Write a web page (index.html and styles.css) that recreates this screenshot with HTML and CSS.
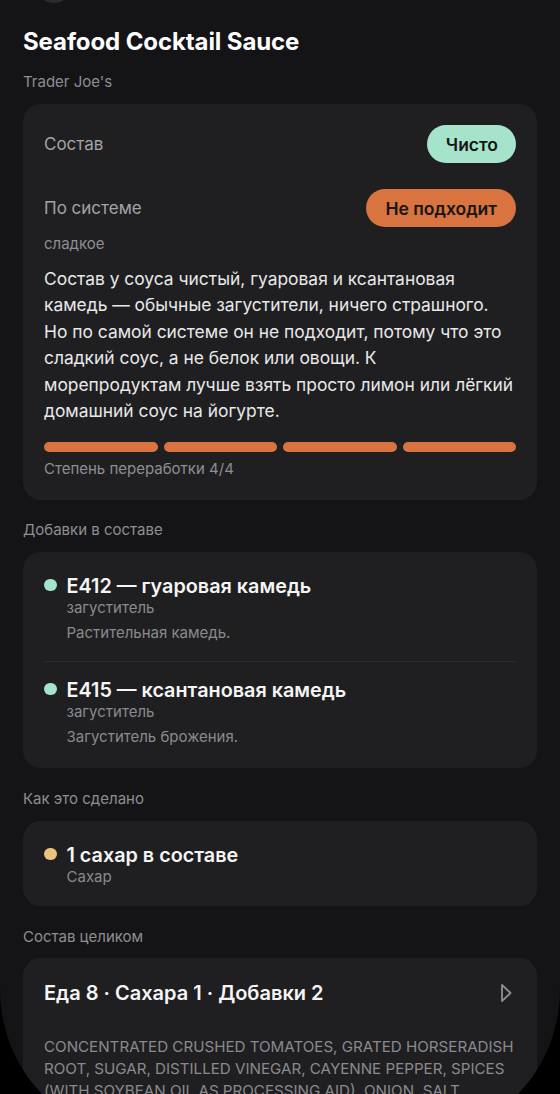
FILE: index.html
```html
<!DOCTYPE html>
<html lang="ru">
<head>
<meta charset="utf-8">
<title>Seafood Cocktail Sauce</title>
<link rel="stylesheet" href="styles.css">
</head>
<body>
<div class="screen">
  <div class="topbar"><span class="back"></span></div>
  <h1 class="title">Seafood Cocktail Sauce</h1>
  <div class="brand">Trader Joe's</div>

  <section class="card verdict">
    <div class="row">
      <span class="row-label">Состав</span>
      <span class="pill pill-clean">Чисто</span>
    </div>
    <div class="row row-system">
      <span class="row-label">По системе</span>
      <span class="pill pill-bad">Не подходит</span>
    </div>
    <div class="tag">сладкое</div>
    <p class="summary">Состав у соуса чистый, гуаровая и ксантановая камедь&nbsp;— обычные загустители, ничего страшного. Но по самой системе он не подходит, потому что это сладкий соус, а не белок или овощи. К морепродуктам лучше взять просто лимон или лёгкий домашний соус на йогурте.</p>
    <div class="bars">
      <span class="bar"></span><span class="bar"></span><span class="bar"></span><span class="bar"></span>
    </div>
    <div class="bars-caption">Степень переработки 4/4</div>
  </section>

  <div class="section-label">Добавки в составе</div>
  <section class="card list">
    <div class="item">
      <span class="dot dot-mint"></span>
      <div class="item-body">
        <div class="item-title">E412 — гуаровая камедь</div>
        <div class="item-sub">загуститель</div>
        <div class="item-desc">Растительная камедь.</div>
      </div>
    </div>
    <div class="divider"></div>
    <div class="item">
      <span class="dot dot-mint"></span>
      <div class="item-body">
        <div class="item-title">E415 — ксантановая камедь</div>
        <div class="item-sub">загуститель</div>
        <div class="item-desc">Загуститель брожения.</div>
      </div>
    </div>
  </section>

  <div class="section-label section-label-b">Как это сделано</div>
  <section class="card list list-short">
    <div class="item">
      <span class="dot dot-yellow"></span>
      <div class="item-body">
        <div class="item-title">1 сахар в составе</div>
        <div class="item-sub">Сахар</div>
      </div>
    </div>
  </section>

  <div class="section-label section-label-b">Состав целиком</div>
  <section class="card full">
    <div class="full-head">
      <span class="full-title">Еда 8 · Сахара 1 · Добавки 2</span>
      <svg class="chev" width="12" height="20" viewBox="0 0 12 20" aria-hidden="true">
        <path d="M2 1.8 L10.5 10 L2 18.2 Z" fill="none" stroke="#8e8e93" stroke-width="1.8" stroke-linejoin="round"/>
      </svg>
    </div>
    <p class="ingredients">CONCENTRATED CRUSHED TOMATOES, GRATED HORSERADISH ROOT, SUGAR, DISTILLED VINEGAR, CAYENNE PEPPER, SPICES (WITH SOYBEAN OIL AS PROCESSING AID), ONION, SALT, XANTHAN GUM, GUAR GUM, NATURAL FLAVOR.</p>
  </section>
</div>
</body>
</html>
```

FILE: styles.css
```css
* { box-sizing: border-box; }
html, body {
  margin: 0;
  padding: 0;
  height: 1094px;
  overflow: hidden;
  background: #000;
}
body {
  font-family: Inter, "Noto Sans", "DejaVu Sans", sans-serif;
  color: #f2f2f2;
}
.screen {
  height: 1140px;
  background: #141416;
  border-radius: 0 0 150px 150px;
  overflow: hidden;
  padding: 0 23px;
}
.topbar {
  height: 4px;
  display: flex;
}
.back {
  width: 36px;
  height: 36px;
  margin-top: -33px;
  margin-left: 13px;
  border-radius: 50%;
  background: #2b2b2e;
}
.title {
  margin: 24px 0 0;
  font-size: 24px;
  font-weight: 700;
  line-height: 28px;
  letter-spacing: -0.1px;
  color: #ffffff;
}
.brand {
  margin-top: 17px;
  font-size: 15px;
  line-height: 18px;
  color: #8e8e93;
}
.card {
  background: #1f1f21;
  border-radius: 18px;
}
.verdict {
  margin-top: 13px;
  padding: 21px 21px 22px;
}
.row {
  display: flex;
  justify-content: space-between;
  align-items: center;
  height: 38px;
}
.row-system {
  margin-top: 26px;
}
.row-label {
  font-size: 17px;
  color: #a3a3a8;
}
.pill {
  height: 38px;
  display: inline-flex;
  align-items: center;
  border-radius: 19px;
  font-size: 17.5px;
  font-weight: 600;
  color: #161616;
}
.pill-clean {
  background: #a6e3cb;
  padding: 0 18px 0 19px;
}
.pill-bad {
  background: #d9733f;
  padding: 0 19px 0 19px;
}
.tag {
  margin-top: 8px;
  font-size: 15px;
  line-height: 18px;
  color: #8e8e93;
}
.summary {
  margin: 12.5px 1.5px 0 0;
  font-size: 17.4px;
  line-height: 26.6px;
  color: #e8e8e8;
}
.bars {
  display: flex;
  gap: 6px;
  margin-top: 16.5px;
}
.bar {
  flex: 1;
  height: 10px;
  border-radius: 5px;
  background: #d9733f;
}
.bars-caption {
  margin-top: 8px;
  font-size: 15px;
  line-height: 18px;
  color: #8e8e93;
}
.section-label {
  margin-top: 21px;
  font-size: 15px;
  line-height: 18px;
  color: #8e8e93;
}
.section-label-b {
  margin-top: 22px;
}
.list {
  margin-top: 13px;
  padding: 22px 21px 22px;
}
.list-short {
  padding: 22px 21px 19px;
}
.item {
  display: flex;
  gap: 10px;
}
.dot {
  flex: none;
  width: 12.5px;
  height: 12.5px;
  border-radius: 50%;
  margin-top: 5px;
}
.dot-mint { background: #a6e3cb; }
.dot-yellow { background: #eac47f; }
.item-title {
  font-size: 19.8px;
  font-weight: 600;
  line-height: 24px;
  color: #f5f5f5;
}
.item-sub {
  font-size: 15px;
  line-height: 20px;
  color: #8a8a8e;
}
.item-desc {
  margin-top: 6px;
  font-size: 15px;
  line-height: 18px;
  color: #8a8a8e;
}
.divider {
  height: 1px;
  background: #2c2c2f;
  margin: 19px 0 16px;
}
.full {
  margin-top: 12px;
  padding: 21px 21px 20px;
}
.full-head {
  display: flex;
  justify-content: space-between;
  align-items: center;
  height: 28px;
}
.full-title {
  font-size: 20px;
  font-weight: 600;
  color: #f5f5f5;
}
.chev {
  margin-right: 4px;
}
.ingredients {
  margin: 29px 0 0;
  font-size: 15.15px;
  line-height: 22px;
  color: #8a8a8e;
  text-transform: uppercase;
}
```
